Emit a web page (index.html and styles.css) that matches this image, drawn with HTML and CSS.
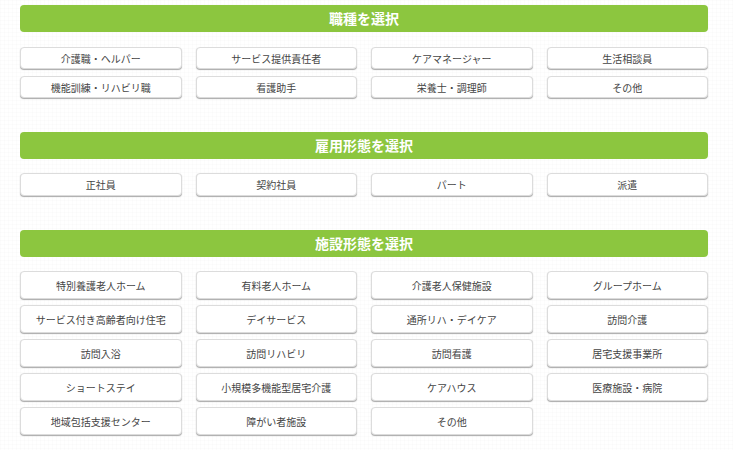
FILE: index.html
```html
<!DOCTYPE html>
<html lang="ja">
<head>
  <meta charset="UTF-8">
  <meta name="viewport" content="width=device-width, initial-scale=1.0">
  <title>求人検索</title>
  <link rel="stylesheet" href="styles.css">
</head>
<body>

  <div class="search">
    <!-- 職種 -->
    <div class="section">
      <h2 class="section-title">職種を選択</h2>
      <div class="choices">
        <button class="choice">介護職・ヘルパー</button>
        <button class="choice">サービス提供責任者</button>
        <button class="choice">ケアマネージャー</button>
        <button class="choice">生活相談員</button>
        <button class="choice">機能訓練・リハビリ職</button>
        <button class="choice">看護助手</button>
        <button class="choice">栄養士・調理師</button>
        <button class="choice">その他</button>
      </div>
    </div>

    <!-- 雇用形態 -->
    <div class="section">
      <h2 class="section-title">雇用形態を選択</h2>
      <div class="choices choices-md">
        <button class="choice">正社員</button>
        <button class="choice">契約社員</button>
        <button class="choice">パート</button>
        <button class="choice">派遣</button>
      </div>
    </div>

    <!-- 施設形態 -->
    <div class="section">
      <h2 class="section-title">施設形態を選択</h2>
      <div class="choices choices-lg">
        <button class="choice">特別養護老人ホーム</button>
        <button class="choice">有料老人ホーム</button>
        <button class="choice">介護老人保健施設</button>
        <button class="choice">グループホーム</button>
        <button class="choice">サービス付き高齢者向け住宅</button>
        <button class="choice">デイサービス</button>
        <button class="choice">通所リハ・デイケア</button>
        <button class="choice">訪問介護</button>
        <button class="choice">訪問入浴</button>
        <button class="choice">訪問リハビリ</button>
        <button class="choice">訪問看護</button>
        <button class="choice">居宅支援事業所</button>
        <button class="choice">ショートステイ</button>
        <button class="choice">小規模多機能型居宅介護</button>
        <button class="choice">ケアハウス</button>
        <button class="choice">医療施設・病院</button>
        <button class="choice">地域包括支援センター</button>
        <button class="choice">障がい者施設</button>
        <button class="choice">その他</button>
      </div>
    </div>
  </div>

</body>
</html>
```

FILE: styles.css
```css
body {
  margin: 0;
  padding: 0;
  background-color: #fff;
  background-image:
    linear-gradient(rgba(0, 0, 0, 0.012) 1px, transparent 1px),
    linear-gradient(90deg, rgba(0, 0, 0, 0.012) 1px, transparent 1px);
  background-size: 4px 4px;
  font-family: "Noto Sans CJK JP", "Noto Sans", sans-serif;
  color: #444;
}

.search {
  width: 688px;
  padding: 5px 0 0 20px;
}

.section {
  margin-bottom: 34px;
}

.section-title {
  margin: 0;
  height: 27px;
  line-height: 27px;
  background-color: #8cc63f;
  border-radius: 4px;
  color: #fff;
  font-size: 14px;
  font-weight: bold;
  text-align: center;
}

.choices {
  display: grid;
  grid-template-columns: repeat(4, 1fr);
  column-gap: 14px;
  row-gap: 7px;
  margin-top: 15px;
}

.choice {
  height: 22px;
  padding: 0;
  background-color: #fff;
  border: 1px solid #dcdcdc;
  border-radius: 4px;
  box-shadow: 0 1px 1px #aaa;
  font-family: inherit;
  font-size: 10px;
  color: #444;
  cursor: pointer;
}

.choices-md {
  margin-top: 14px;
}

.choices-md .choice {
  height: 23px;
}

.choices-lg {
  margin-top: 14px;
  row-gap: 6px;
}

.choices-lg .choice {
  height: 28px;
}
```
